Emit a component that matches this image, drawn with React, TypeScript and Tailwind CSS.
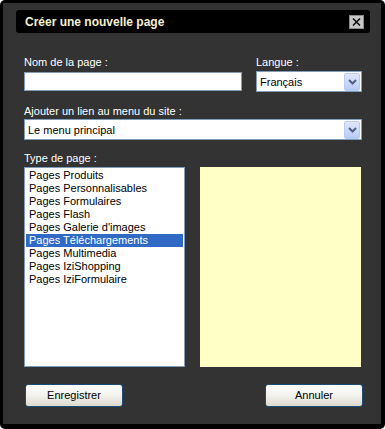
import React from "react";

const items = [
  "Pages Produits",
  "Pages Personnalisables",
  "Pages Formulaires",
  "Pages Flash",
  "Pages Galerie d'images",
  "Pages Téléchargements",
  "Pages Multimedia",
  "Pages IziShopping",
  "Pages IziFormulaire",
];

function Arrow() {
  return (
    <div className="w-[16px] h-[18px] rounded-[2px] border border-[#b9cbf3] bg-gradient-to-b from-[#dfe8fd] to-[#b8cbf7] flex items-center justify-center">
      <svg width="9" height="6" viewBox="0 0 9 6">
        <path d="M1 1 L4.5 4.5 L8 1" stroke="#4d6185" strokeWidth="2" fill="none" />
      </svg>
    </div>
  );
}

function Select({ value, className }: { value: string; className: string }) {
  return (
    <div
      className={`h-[21px] bg-white border border-[#7f9db9] flex items-center justify-between pl-[3px] pr-[1px] ${className}`}
    >
      <span className="text-black text-[11px] leading-[14px]">{value}</span>
      <Arrow />
    </div>
  );
}

function Button({ label }: { label: string }) {
  return (
    <div className="w-[98px] h-[23px] rounded-[3px] border border-[#1c4a7a] bg-gradient-to-b from-[#ffffff] via-[#f3f2ec] to-[#dedbcf] flex items-center justify-center text-black text-[11px]">
      {label}
    </div>
  );
}

export default function App() {
  return (
    <div
      className="w-[385px] h-[429px] bg-white"
      style={{ fontFamily: '"Liberation Sans", Arial, sans-serif' }}
    >
      <div className="w-full h-full bg-black rounded-[5px] pt-[3px] pl-[3px] pr-[4px] pb-[5px]">
        <div className="h-full bg-[#333333] flex flex-col">
          <div className="mt-[7px] ml-[13px] w-[354px] h-[23px] bg-black rounded-[3px] flex items-center justify-between pl-[9px] pr-[6px]">
            <span className="text-[#f4f0d0] font-bold text-[12px] leading-[16px]">
              Créer une nouvelle page
            </span>
            <div className="w-[15px] h-[14px] bg-[#c6c6c6] border border-[#8a8a8a] flex items-center justify-center">
              <svg width="9" height="8" viewBox="0 0 9 8">
                <path d="M1 0.5 L8 7.5 M8 0.5 L1 7.5" stroke="#111" strokeWidth="1.6" />
              </svg>
            </div>
          </div>

          <div className="pl-[21px] flex flex-col">
            <div className="flex mt-[22px]">
              <div className="w-[218px] flex flex-col">
                <span className="text-white text-[11px] leading-[14px] h-[14px]">Nom de la page :</span>
                <div className="mt-[3px] h-[19px] bg-white border border-[#7f9db9]" />
              </div>
              <div className="ml-[14px] w-[106px] flex flex-col">
                <span className="text-white text-[11px] leading-[14px] h-[14px]">Langue :</span>
                <Select value="Français" className="mt-[2px]" />
              </div>
            </div>

            <span className="mt-[12px] text-white text-[11px] leading-[14px] h-[14px]">
              Ajouter un lien au menu du site :
            </span>
            <Select value="Le menu principal" className="mt-[1px] w-[338px]" />

            <span className="mt-[11px] text-white text-[11px] leading-[14px] h-[14px]">Type de page :</span>
            <div className="mt-[2px] flex">
              <div className="w-[161px] h-[200px] bg-white border border-[#7f9db9] p-[1px] flex flex-col">
                {items.map((it, i) => (
                  <div
                    key={it}
                    className={`h-[13px] leading-[13px] text-[11px] pl-[3px] whitespace-nowrap ${
                      i === 5 ? "bg-[#316ac5] text-white" : "text-black"
                    }`}
                  >
                    {it}
                  </div>
                ))}
              </div>
              <div className="ml-[15px] w-[161px] h-[200px] bg-[#ffffc6]" />
            </div>

            <div className="mt-[17px] flex w-[339px] justify-between pl-[1px]">
              <Button label="Enregistrer" />
              <Button label="Annuler" />
            </div>
          </div>
        </div>
      </div>
    </div>
  );
}
